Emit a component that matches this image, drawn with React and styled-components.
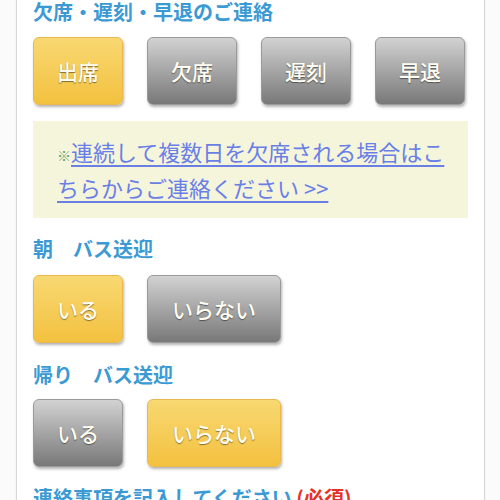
import React from 'react';
import styled, { createGlobalStyle, css } from 'styled-components';

const GlobalStyle = createGlobalStyle`
  html, body {
    margin: 0;
    padding: 0;
    background: #fbfbfb;
  }
  body {
    font-family: "Noto Sans CJK JP", "Noto Sans", sans-serif;
  }
`;

const Page = styled.div`
  padding: 0 15px 0 16px;
  overflow: hidden;
  height: 500px;
`;

const Card = styled.div`
  background: #fff;
  border-left: 1px solid #d6d6d6;
  border-right: 1px solid #d6d6d6;
  box-shadow: 0 0 2px rgba(0, 0, 0, 0.06);
  padding: 0 16px 20px 16px;
`;

const Heading = styled.h2`
  margin: ${p => p.$top || 0}px 0 0;
  font-size: 20px;
  line-height: 24px;
  font-weight: 700;
  color: #3b9ad4;
  white-space: nowrap;
`;

const Required = styled.span`
  color: #e5332a;
`;

const ButtonRow = styled.div`
  display: flex;
  gap: 24px;
  margin-top: ${p => p.$top || 13}px;
`;

const yellow = css`
  background: linear-gradient(to bottom, #f8d872 0%, #f3c13f 100%);
  border: 1px solid #e9b84e;
`;

const gray = css`
  background: linear-gradient(to bottom, #d2d2d2 0%, #787878 100%);
  border: 1px solid #9a9a9a;
`;

const Choice = styled.button`
  box-sizing: border-box;
  width: ${p => p.$w || 90}px;
  height: 68px;
  border-radius: 6px;
  ${p => (p.$on ? yellow : gray)}
  box-shadow: 1px 2px 3px rgba(0, 0, 0, 0.3);
  font-family: "Noto Sans CJK JP", sans-serif;
  font-size: 21px;
  font-weight: 500;
  color: #fffdf2;
  text-shadow: 0 1px 1px rgba(0, 0, 0, 0.45);
  padding: 0;
  cursor: pointer;
`;

const Notice = styled.div`
  margin-top: 16px;
  background: #f5f5dc;
  padding: 14px 20px 15px 24px;
  font-size: 22px;
  line-height: 32px;
`;

const Mark = styled.span`
  color: #6f9d5e;
  font-size: 14px;
`;

const NoticeLink = styled.a`
  color: #6a7fe6;
  text-decoration: underline;
  text-underline-offset: 4px;
  text-decoration-thickness: 2px;
`;

export default function App() {
  return (
    <>
      <GlobalStyle />
      <Page>
        <Card>
          <Heading>欠席・遅刻・早退のご連絡</Heading>
          <ButtonRow>
            <Choice $on>出席</Choice>
            <Choice>欠席</Choice>
            <Choice>遅刻</Choice>
            <Choice>早退</Choice>
          </ButtonRow>

          <Notice>
            <Mark>※</Mark>
            <NoticeLink href="#">連続して複数日を欠席される場合はこちらからご連絡ください &gt;&gt;</NoticeLink>
          </Notice>

          <Heading $top={19}>朝　バス送迎</Heading>
          <ButtonRow $top={14}>
            <Choice $on>いる</Choice>
            <Choice $w={134}>いらない</Choice>
          </ButtonRow>

          <Heading $top={20}>帰り　バス送迎</Heading>
          <ButtonRow $top={12}>
            <Choice>いる</Choice>
            <Choice $on $w={134}>いらない</Choice>
          </ButtonRow>

          <Heading $top={19}>
            連絡事項を記入してください <Required>(必須)</Required>
          </Heading>
        </Card>
      </Page>
    </>
  );
}
